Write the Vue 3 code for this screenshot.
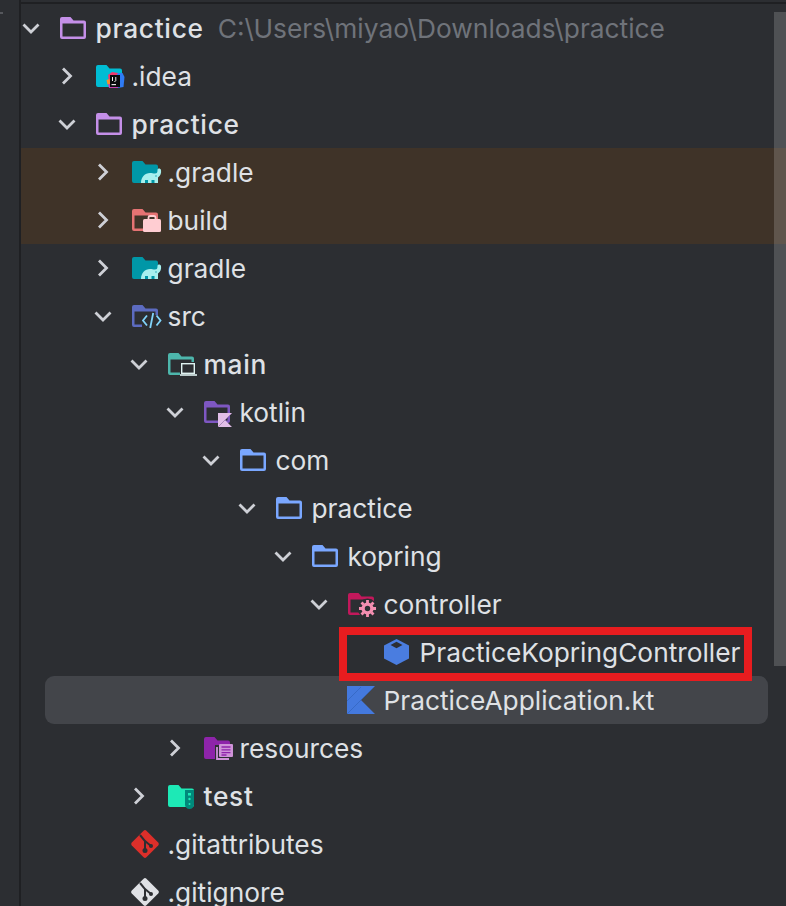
<template>
  <div class="window">
    <div class="gutter"><span class="gutter-mark"></span></div>
    <div class="panel">
      <div class="topline"></div>
      <div
        v-for="row in rows"
        :key="row.id"
        class="row"
        :class="{ ignored: row.ignored, selected: row.selected }"
        :style="{ paddingLeft: 1 + row.depth * 36 + 'px' }"
      >
        <span class="arrow">
          <svg v-if="row.arrow" width="18" height="18" viewBox="0 0 18 18">
            <path v-if="row.arrow === 'open'" d="M1.500 5.500 9 13l7.500-7.500" class="chevron" />
            <path v-else d="M5 1.500 12.500 9 5 16.500" class="chevron" />
          </svg>
        </span>
        <span class="icon">
          <svg class="glyph" width="30" height="28" viewBox="0 0 30 28">
            <!-- plain outline folders -->
            <path v-if="row.outline" :d="folderOutline" :fill="row.outline" fill-rule="evenodd" />

            <g v-if="row.icon === 'idea'">
              <path :d="folderSolid" fill="#00bcd4" />
              <path d="M20 11h6.500l2 4-1 10-6 1z" fill="#2f7bf5" />
              <path d="M12 13l4-3 6 1-4 6-5 3z" fill="#f0386e" />
              <path d="M10.500 18l3-1 1 5-3 .5z" fill="#f78c2a" />
              <path d="M12 22h10v4H13z" fill="#c93fae" />
              <rect x="14" y="13" width="10" height="12" fill="#0b0b0d" />
              <rect x="15.500" y="22" width="4.500" height="1.200" fill="#e6e6e6" />
              <path d="M16.500 15v4M19.800 15v3.500c0 .8-.8 1-1.500 1" stroke="#eee" stroke-width="1" fill="none" />
            </g>

            <g v-if="row.icon === 'gradle'">
              <path :d="folderSolid" fill="#0097a7" />
              <path
                d="M9 25c0-6 4-10 9-10 2 0 3 .6 5 .6s2.500-1 2.500-3.500c0-2 3-2 3.500 0 .5 3-.5 6-3 7.500V25h-3.500v-3h-3v3H16v-3h-3v3z"
                fill="#a8f0ee"
              />
              <circle cx="24" cy="18" r=".7" fill="#0097a7" />
            </g>

            <g v-if="row.icon === 'build'">
              <path :d="folderOutline" fill="#e57373" fill-rule="evenodd" />
              <path d="M16.500 13.500v-2a1.500 1.500 0 0 1 1.500-1.500h4a1.500 1.500 0 0 1 1.500 1.500v2" fill="none" stroke="#ffcdd2" stroke-width="1.800" />
              <rect x="11" y="13" width="18" height="13" rx="1.500" fill="#ffcdd2" />
            </g>

            <g v-if="row.icon === 'src'">
              <path :d="folderOutline" fill="#5c6bc0" fill-rule="evenodd" />
              <rect x="10" y="13" width="17" height="13" fill="#2c2e32" />
              <path d="M15 13.500 11 18.500l4 5M24.500 13.500l4 5-4 5M21.200 11l-3 15" fill="none" stroke="#81d4fa" stroke-width="1.800" />
            </g>

            <g v-if="row.icon === 'main'">
              <path :d="folderOutline" fill="#4db6ac" fill-rule="evenodd" />
              <rect x="12" y="12" width="18" height="15" fill="#2c2e32" />
              <rect x="13.700" y="13.700" width="12.600" height="9.600" fill="none" stroke="#e0f2f1" stroke-width="1.400" />
              <path d="M12 25h17" stroke="#e0f2f1" stroke-width="1.600" />
            </g>

            <g v-if="row.icon === 'kotlin'">
              <path :d="folderOutline" fill="#7e57c2" fill-rule="evenodd" />
              <path d="M14 29V15h14l-7 7 7 7z" fill="#e1bee7" />
              <path d="M14 29 27.500 15.500" stroke="#9a7bb0" stroke-width=".8" />
            </g>

            <g v-if="row.icon === 'controller'">
              <path :d="folderOutline" fill="#c2185b" fill-rule="evenodd" />
              <circle cx="19.500" cy="18.500" r="10" fill="#2c2e32" />
              <circle cx="19.500" cy="18.500" r="4.400" fill="none" stroke="#f48fb1" stroke-width="3.400" />
              <path d="M19.500 10v3M19.500 24v3M11 18.500h3M25 18.500h3M13.500 12.500l2 2M23.500 22.500l2 2M25.500 12.500l-2 2M15.500 22.500l-2 2" stroke="#f48fb1" stroke-width="2.800" />
            </g>

            <g v-if="row.icon === 'resources'">
              <path :d="folderSolid" fill="#8e24aa" />
              <rect x="11" y="11" width="16" height="16" fill="#2c2e32" />
              <path d="M13 13v12h12" fill="none" stroke="#ce93d8" stroke-width="1.800" />
              <rect x="15" y="10" width="14" height="13" rx="1" fill="#ce93d8" />
              <path d="M17.500 13h9M17.500 15.800h9M17.500 18.600h9M17.500 21h5" stroke="#8e24aa" stroke-width="1.300" />
            </g>

            <g v-if="row.icon === 'test'">
              <path :d="folderSolid" fill="#1de9b6" />
              <path d="M17 8h9v14.500a4.500 4.500 0 0 1-9 0z" fill="#00897b" />
              <rect x="20" y="11" width="3" height="2.500" fill="#1de9b6" />
              <circle cx="21.500" cy="17" r="1.200" fill="#1de9b6" />
              <circle cx="21.500" cy="22" r="1" fill="#1de9b6" />
            </g>

            <g v-if="row.icon === 'class'">
              <path d="M12.500 1 25 7.500v13L12.500 27 0 20.500v-13z" fill="#4a7de0" />
              <path d="M12.500 3.800 18.500 7l-6 3.200L6.500 7z" fill="#2c2e32" />
            </g>

            <g v-if="row.icon === 'kt'" transform="translate(-1 0)">
              <path d="M0 28V0h28L14 14l14 14z" fill="#4479de" />
              <path d="M0 28 27 1M0 15 14 1" stroke="#2f5fb5" stroke-width=".6" />
            </g>

            <g v-if="row.icon === 'git'" transform="translate(-1 0)">
              <path d="M12.600 .8a2 2 0 0 1 2.800 0l11.800 11.800a2 2 0 0 1 0 2.800L15.400 27.200a2 2 0 0 1-2.800 0L.8 15.400a2 2 0 0 1 0-2.800z" :fill="row.gitColor" />
              <path d="M9 5l5 6v9M14 11l6 5" fill="none" stroke="#2c2e32" stroke-width="2" />
              <circle cx="14" cy="20.500" r="2.500" fill="#2c2e32" />
              <circle cx="20" cy="16" r="2" fill="#2c2e32" />
            </g>
          </svg>
        </span>
        <span class="label" :class="{ strong: row.strong }">{{ row.name }}</span>
        <span v-if="row.hint" class="hint">{{ row.hint }}</span>
      </div>
      <div class="scrollbar"></div>
      <div class="callout"></div>
    </div>
  </div>
</template>

<script setup>
const folderOutline =
  "M0 5a2 2 0 0 1 2-2h8.500l3 3.500H24a2 2 0 0 1 2 2V23a2 2 0 0 1-2 2H2a2 2 0 0 1-2-2zM2.500 9.500v13h21v-13z";
const folderSolid =
  "M0 5a2 2 0 0 1 2-2h8.500l3 3.500H24a2 2 0 0 1 2 2V23a2 2 0 0 1-2 2H2a2 2 0 0 1-2-2z";

const purple = "#c48fe8";
const blue = "#7aa7ff";

const rows = [
  { id: 0, name: "practice", depth: 0, arrow: "open", outline: purple, strong: true, hint: "C:\\Users\\miyao\\Downloads\\practice" },
  { id: 1, name: ".idea", depth: 1, arrow: "closed", icon: "idea" },
  { id: 2, name: "practice", depth: 1, arrow: "open", outline: purple, strong: true },
  { id: 3, name: ".gradle", depth: 2, arrow: "closed", icon: "gradle", ignored: true },
  { id: 4, name: "build", depth: 2, arrow: "closed", icon: "build", ignored: true },
  { id: 5, name: "gradle", depth: 2, arrow: "closed", icon: "gradle" },
  { id: 6, name: "src", depth: 2, arrow: "open", icon: "src" },
  { id: 7, name: "main", depth: 3, arrow: "open", icon: "main", strong: true },
  { id: 8, name: "kotlin", depth: 4, arrow: "open", icon: "kotlin" },
  { id: 9, name: "com", depth: 5, arrow: "open", outline: blue },
  { id: 10, name: "practice", depth: 6, arrow: "open", outline: blue },
  { id: 11, name: "kopring", depth: 7, arrow: "open", outline: blue },
  { id: 12, name: "controller", depth: 8, arrow: "open", icon: "controller" },
  { id: 13, name: "PracticeKopringController", depth: 9, icon: "class" },
  { id: 14, name: "PracticeApplication.kt", depth: 8, icon: "kt", selected: true },
  { id: 15, name: "resources", depth: 4, arrow: "closed", icon: "resources" },
  { id: 16, name: "test", depth: 3, arrow: "closed", icon: "test", strong: true },
  { id: 17, name: ".gitattributes", depth: 2, icon: "git", gitColor: "#dc2f2a" },
  { id: 18, name: ".gitignore", depth: 2, icon: "git", gitColor: "#dfe1e5" },
];
</script>

<style>
html,
body {
  margin: 0;
  background: #2c2e32;
  overflow: hidden;
}
</style>

<style scoped>
.window {
  display: flex;
  height: 906px;
  overflow: hidden;
  background: #2c2e32;
  font-family: Inter, "Noto Sans", sans-serif;
}

.gutter {
  flex: 0 0 19px;
  border-right: 2px solid #1f2023;
  position: relative;
}

.gutter-mark {
  position: absolute;
  top: 12px;
  left: 0;
  width: 3px;
  height: 2px;
  background: #55575c;
}

.panel {
  flex: 1;
  position: relative;
  min-width: 0;
}

.topline {
  height: 2px;
  margin-top: 2px;
  background: #1f2023;
}

.row {
  position: relative;
  display: flex;
  align-items: center;
  height: 48px;
  white-space: nowrap;
  font-size: 26.300px;
  color: #dfe1e5;
}

.row.ignored {
  background: #3f3328;
}

.row.selected::before {
  content: "";
  position: absolute;
  top: 0;
  bottom: 0;
  left: 24px;
  right: 18px;
  border-radius: 9px;
  background: #43454a;
}

.arrow {
  position: relative;
  flex: 0 0 38px;
  display: flex;
  align-items: center;
}

.chevron {
  fill: none;
  stroke: #ced0d6;
  stroke-width: 2.800;
}

.icon {
  position: relative;
  flex: 0 0 35.500px;
  display: flex;
  align-items: center;
}

.glyph {
  overflow: visible;
}

.label {
  position: relative;
}

.label.strong {
  font-weight: 500;
  letter-spacing: 0.700px;
}

.hint {
  position: relative;
  margin-left: 14px;
  color: #6f737a;
}

.scrollbar {
  position: absolute;
  top: 12px;
  right: 0;
  width: 12px;
  height: 654px;
  background: rgba(255, 255, 255, 0.17);
}

.callout {
  position: absolute;
  top: 627px;
  left: 318px;
  width: 397px;
  height: 38px;
  border: 8px solid #e81c1f;
}
</style>
